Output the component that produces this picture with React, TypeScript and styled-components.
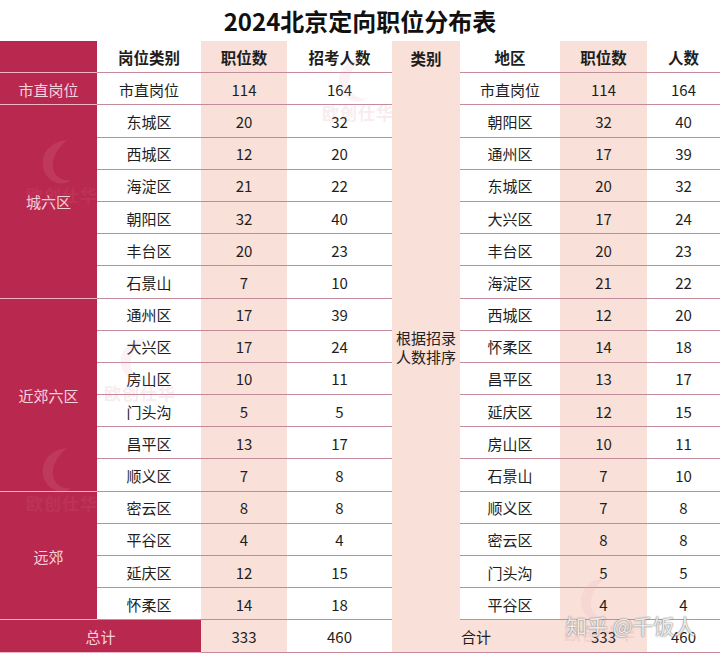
import React from 'react';
import styled, { createGlobalStyle } from 'styled-components';

const GlobalStyle = createGlobalStyle`
  html, body {
    margin: 0;
    padding: 0;
    background: #ffffff;
  }
  body {
    font-family: "Noto Sans CJK SC", "Noto Sans", sans-serif;
    color: #1e1e1e;
  }
`;

const CRIMSON = '#b9294f';
const PINK = '#f9e0d8';
const LINE = '#c48c9a';

type Tone = 'white' | 'pink' | 'crimson';

interface IRow {
  left: [string, number, number];
  right: [string, number, number];
}

const rows: IRow[] = [
  { left: ['市直岗位', 114, 164], right: ['市直岗位', 114, 164] },
  { left: ['东城区', 20, 32], right: ['朝阳区', 32, 40] },
  { left: ['西城区', 12, 20], right: ['通州区', 17, 39] },
  { left: ['海淀区', 21, 22], right: ['东城区', 20, 32] },
  { left: ['朝阳区', 32, 40], right: ['大兴区', 17, 24] },
  { left: ['丰台区', 20, 23], right: ['丰台区', 20, 23] },
  { left: ['石景山', 7, 10], right: ['海淀区', 21, 22] },
  { left: ['通州区', 17, 39], right: ['西城区', 12, 20] },
  { left: ['大兴区', 17, 24], right: ['怀柔区', 14, 18] },
  { left: ['房山区', 10, 11], right: ['昌平区', 13, 17] },
  { left: ['门头沟', 5, 5], right: ['延庆区', 12, 15] },
  { left: ['昌平区', 13, 17], right: ['房山区', 10, 11] },
  { left: ['顺义区', 7, 8], right: ['石景山', 7, 10] },
  { left: ['密云区', 8, 8], right: ['顺义区', 7, 8] },
  { left: ['平谷区', 4, 4], right: ['密云区', 8, 8] },
  { left: ['延庆区', 12, 15], right: ['门头沟', 5, 5] },
  { left: ['怀柔区', 14, 18], right: ['平谷区', 4, 4] },
];

const groups = [
  { name: '市直岗位', span: 1 },
  { name: '城六区', span: 6 },
  { name: '近郊六区', span: 6 },
  { name: '远郊', span: 4 },
];

// faint brand marks scattered over the sheet
const watermarks = [
  { x: 22, y: 136 },
  { x: 318, y: 54 },
  { x: 22, y: 444 },
  { x: 100, y: 334 },
  { x: 560, y: 574 },
];

const App = () => {
  let groupRow = 2;
  return (
    <>
      <GlobalStyle />
      <Page>
        <Title>2024北京定向职位分布表</Title>
        <Table>
          <Cell col={1} row={1} tone="crimson" />
          <Cell col={2} row={1} bold>岗位类别</Cell>
          <Cell col={3} row={1} tone="pink" bold>职位数</Cell>
          <Cell col={4} row={1} bold>招考人数</Cell>
          <Cell col={5} row={1} tone="pink" bold plain>类别</Cell>
          <Cell col={6} row={1} bold>地区</Cell>
          <Cell col={7} row={1} tone="pink" bold>职位数</Cell>
          <Cell col={8} row={1} bold>人数</Cell>

          {groups.map((g) => {
            const start = groupRow;
            groupRow += g.span;
            return (
              <Cell key={g.name} col={1} row={start} span={g.span} tone="crimson">
                {g.name}
              </Cell>
            );
          })}

          <Cell col={5} row={2} span={17} tone="pink" plain>
            <SortNote>根据招录<br />人数排序</SortNote>
          </Cell>

          {rows.map((r, i) => (
            <React.Fragment key={i}>
              <Cell col={2} row={i + 2}>{r.left[0]}</Cell>
              <Cell col={3} row={i + 2} tone="pink">{r.left[1]}</Cell>
              <Cell col={4} row={i + 2}>{r.left[2]}</Cell>
              <Cell col={6} row={i + 2}>{r.right[0]}</Cell>
              <Cell col={7} row={i + 2} tone="pink">{r.right[1]}</Cell>
              <Cell col={8} row={i + 2}>{r.right[2]}</Cell>
            </React.Fragment>
          ))}

          <Cell col={1} row={19} wide={2} tone="crimson">总计</Cell>
          <Cell col={3} row={19} tone="pink">333</Cell>
          <Cell col={4} row={19}>460</Cell>
          <Cell col={5} row={19} wide={2} tone="pink">合计</Cell>
          <Cell col={7} row={19} tone="pink">333</Cell>
          <Cell col={8} row={19}>460</Cell>
        </Table>

        {watermarks.map((w, i) => (
          <Watermark key={i} style={{ left: w.x, top: w.y }}>
            <svg width="70" height="60" viewBox="0 0 70 60">
              <path
                d="M40 4 C18 6 10 26 20 40 C26 48 38 50 44 44 C34 46 24 38 26 26 C28 14 36 8 40 4 Z"
                fill="#e9a3b8"
              />
            </svg>
            <WatermarkText>欧创仕华</WatermarkText>
          </Watermark>
        ))}

        <Credit>知乎 @千饭人</Credit>
      </Page>
    </>
  );
};

const Page = styled.div`
  position: relative;
  width: 720px;
  height: 656px;
  overflow: hidden;
  background: #ffffff;
`;

const Title = styled.h1`
  margin: 0;
  height: 41px;
  display: flex;
  align-items: center;
  justify-content: center;
  font-size: 24px;
  font-weight: 700;
  color: #111111;
`;

const Table = styled.div`
  display: grid;
  grid-template-columns: 97px 104px 86px 105px 68px 100px 87px 73px;
  grid-auto-rows: 32.2px;
`;

const toneBg: Record<Tone, string> = {
  white: '#ffffff',
  pink: PINK,
  crimson: CRIMSON,
};

const Cell = styled.div<{
  col: number;
  row: number;
  span?: number;
  wide?: number;
  tone?: Tone;
  bold?: boolean;
  plain?: boolean;
}>`
  grid-column: ${(p) => p.col} / span ${(p) => p.wide || 1};
  grid-row: ${(p) => p.row} / span ${(p) => p.span || 1};
  box-sizing: border-box;
  display: flex;
  align-items: center;
  justify-content: center;
  background: ${(p) => toneBg[p.tone || 'white']};
  color: ${(p) => (p.tone === 'crimson' ? '#f7d3dd' : '#1e1e1e')};
  font-size: ${(p) => (p.bold ? '15.5px' : '15px')};
  font-weight: ${(p) => (p.bold ? 700 : 400)};
  border-bottom: ${(p) =>
    p.plain
      ? 'none'
      : p.tone === 'crimson'
      ? '1px solid #ecb4c3'
      : `1.5px solid ${LINE}`};
  padding-top: 1px;
`;

const SortNote = styled.span`
  font-size: 15px;
  line-height: 19px;
  text-align: center;
  color: #222222;
`;

const Watermark = styled.div`
  position: absolute;
  width: 80px;
  display: flex;
  flex-direction: column;
  align-items: center;
  opacity: 0.13;
  pointer-events: none;
`;

const WatermarkText = styled.span`
  margin-top: -14px;
  font-size: 17px;
  font-weight: 700;
  color: #d8708f;
  letter-spacing: 1px;
`;

const Credit = styled.div`
  position: absolute;
  left: 566px;
  top: 610px;
  font-size: 21px;
  color: rgba(255, 255, 255, 0.85);
  text-shadow: 0 0 1px #777, 0 0 2px #999;
  pointer-events: none;
`;

export default App;
